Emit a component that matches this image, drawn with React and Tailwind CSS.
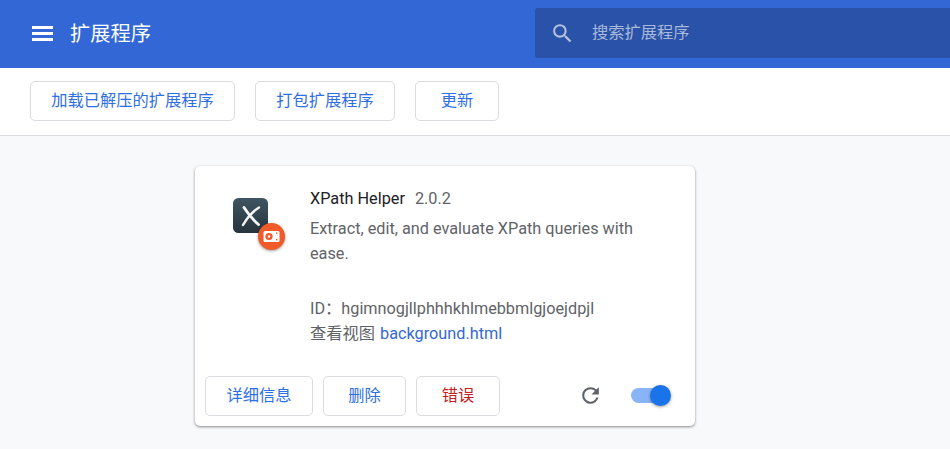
import React from "react";

const font = { fontFamily: '"Roboto", "Noto Sans CJK SC", sans-serif' };

function Btn({ children, className = "" }) {
  return (
    <button className={`h-10 rounded-[5px] border border-[#dadce0] bg-white text-[16.25px] leading-none font-normal whitespace-nowrap ${className}`}>
      {children}
    </button>
  );
}

function ExtIcon() {
  return (
    <div className="relative w-[35px] h-[35px]">
      <svg width="35" height="35" viewBox="0 0 35 35" className="block">
        <defs>
          <linearGradient id="g" x1="0" y1="0" x2="0" y2="1">
            <stop offset="0" stopColor="#3f5561" />
            <stop offset="1" stopColor="#26343d" />
          </linearGradient>
        </defs>
        <rect width="35" height="35" rx="5.5" fill="url(#g)" />
        <path d="M11 9.5 C14 14 19 21 25.5 26.5" stroke="#f4f6f7" strokeWidth="2.8" fill="none" strokeLinecap="round" />
        <path d="M26 9.5 C20.5 13 14 20 10 27" stroke="#f4f6f7" strokeWidth="2.4" fill="none" strokeLinecap="round" />
      </svg>
      <div className="absolute left-[25px] top-[25px] w-[27px] h-[27px] rounded-full bg-[#f15a29] shadow-[0_1px_3px_rgba(0,0,0,0.4)] flex items-center justify-center">
        <svg width="17" height="13" viewBox="0 0 17 13">
          <rect x="0.5" y="1" width="16" height="11" rx="1.5" fill="#fff" />
          <circle cx="6" cy="6.5" r="3.6" fill="#f15a29" />
          <circle cx="6" cy="6.5" r="1.2" fill="#fff" />
          <rect x="13" y="2.5" width="1.4" height="1.4" fill="#f15a29" />
          <rect x="13" y="9" width="1.4" height="1.4" fill="#f15a29" />
        </svg>
      </div>
    </div>
  );
}

export default function App() {
  return (
    <div style={font} className="w-[950px] h-[449px] overflow-hidden bg-[#f8f9fa] flex flex-col">
      <header className="h-[68px] shrink-0 bg-[#3367d6] flex items-center pl-[30px]">
        <svg width="24" height="24" viewBox="0 0 24 24" className="shrink-0">
          <path d="M2 4h21v3H2zM2 10h21v3H2zM2 16h21v3H2z" fill="#fff" />
        </svg>
        <h1 className="ml-4 text-[20.3px] font-normal text-white leading-none">扩展程序</h1>
        <div className="ml-auto w-[415px] h-[50px] bg-[#2a52a8] rounded-l-[3px] flex items-center pl-[15px] mb-[2px]">
          <svg width="25" height="25" viewBox="0 0 24 24" className="shrink-0">
            <path d="M15.5 14h-.79l-.28-.27A6.47 6.47 0 0 0 16 9.5 6.5 6.5 0 1 0 9.5 16c1.61 0 3.09-.59 4.23-1.57l.27.28v.79l5 4.99L20.49 19l-4.99-5zm-6 0C7.01 14 5 11.99 5 9.5S7.01 5 9.5 5 14 7.01 14 9.5 11.99 14 9.5 14z" fill="#b4c2df" />
          </svg>
          <span className="ml-[17px] text-[16.25px] text-[#a9b9da] leading-none">搜索扩展程序</span>
        </div>
      </header>

      <div className="h-[68px] shrink-0 bg-white border-b border-[#dadce0] flex items-start pt-[13px] pl-[30px] gap-5 text-[#2f6fe4]">
        <Btn className="w-[205px]">加载已解压的扩展程序</Btn>
        <Btn className="w-[140px]">打包扩展程序</Btn>
        <Btn className="w-[84px]">更新</Btn>
      </div>

      <main className="flex-1 pl-[195px] pt-[30px]">
        <div className="w-[500px] h-[260px] bg-white rounded-[5px] shadow-[0_1px_3px_rgba(60,64,67,0.45),0_1px_2px_rgba(60,64,67,0.2)] flex flex-col">
          <div className="flex flex-1 min-h-0">
            <div className="w-[115px] shrink-0 pl-[38px] pt-[32px]">
              <ExtIcon />
            </div>
            <div className="pt-[20px] pr-[60px] text-[16.25px] text-[#5f6368] leading-[25px]">
              <div className="flex items-center h-[25px]">
                <span className="text-[#202124]">XPath Helper</span>
                <span className="ml-[10px]">2.0.2</span>
              </div>
              <p className="mt-[5px] w-[330px]">Extract, edit, and evaluate XPath queries with ease.</p>
              <p className="mt-[30px]">ID：hgimnogjllphhhkhlmebbmlgjoejdpjl</p>
              <p>
                查看视图 <span className="ml-px text-[#3367d6]">background.html</span>
              </p>
            </div>
          </div>
          <div className="h-10 mb-[10px] shrink-0 flex items-center pl-[10px] gap-[10px] text-[#2f6fe4]">
            <Btn className="w-[108px]">详细信息</Btn>
            <Btn className="w-[83px]">删除</Btn>
            <Btn className="w-[84px] text-[#c5221f]">错误</Btn>
            <svg width="25" height="25" viewBox="0 0 24 24" className="ml-[68px] shrink-0 -mt-px">
              <path d="M17.65 6.35A7.95 7.95 0 0 0 12 4a8 8 0 1 0 7.73 10h-2.08A6 6 0 1 1 12 6c1.66 0 3.14.69 4.22 1.78L13 11h7V4l-2.35 2.35z" fill="#5f6368" />
            </svg>
            <div className="relative ml-[18px] w-[34px] h-[15px] -mt-px rounded-full bg-[#8ab4f8]">
              <div className="absolute left-[19px] top-[-3px] w-[21px] h-[21px] rounded-full bg-[#1a73e8] shadow-[0_1px_3px_rgba(0,0,0,0.4)]" />
            </div>
          </div>
        </div>
      </main>
    </div>
  );
}
